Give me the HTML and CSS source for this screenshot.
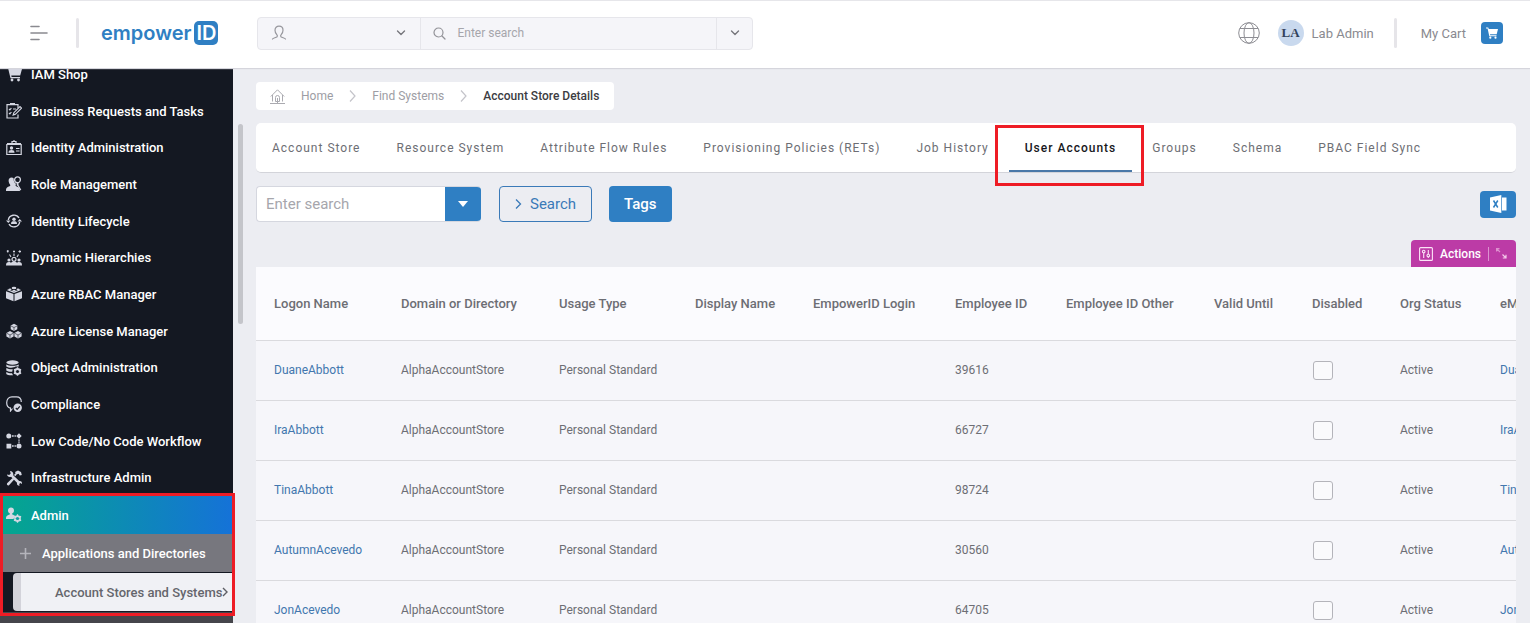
FILE: index.html
```html
<!DOCTYPE html>
<html lang="en">
<head>
    <meta charset="UTF-8">
    <meta name="viewport" content="width=device-width, initial-scale=1.0">
    <title>EmpowerID - Account Store Details</title>
    <link rel="stylesheet" href="styles.css">
</head>
<body>

    <header class="topbar">
        <button class="menu-btn" aria-label="Toggle menu">
            <svg width="18" height="16" viewBox="0 0 18 16" fill="none" stroke="#8a8a90" stroke-width="1.6" stroke-linecap="round"><path d="M1 1.5h8M1 8h16M1 14.5h8"/></svg>
        </button>
        <span class="divider"></span>
        <a class="logo" href="#"><span>empower</span><span class="logo-id">ID</span></a>

        <div class="top-search">
            <button class="scope" aria-label="Search scope">
                <svg width="16" height="16" viewBox="0 0 16 16" fill="none" stroke="#97979d" stroke-width="1.2" stroke-linecap="round"><path d="M1.500 14c1-1.500 3-1 4.600-2.200.6-.6.3-1.300-.3-2.100C4.600 8.300 4 6.800 4 5.200 4 2.800 5.700 1.200 8 1.200s4 1.600 4 4c0 1.600-.6 3.100-1.800 4.500-.6.8-.9 1.500-.3 2.100 1.600 1.200 3.600.7 4.600 2.200"/></svg>
                <svg width="10" height="6" viewBox="0 0 10 6" fill="none" stroke="#77777d" stroke-width="1.4" stroke-linecap="round" stroke-linejoin="round"><path d="M1.500 1 5 4.500 8.500 1"/></svg>
            </button>
            <label class="query">
                <svg width="13" height="13" viewBox="0 0 13 13" fill="none" stroke="#929298" stroke-width="1.2" stroke-linecap="round"><circle cx="5.500" cy="5.500" r="4.500"/><path d="m9 9 3 3"/></svg>
                <input type="text" placeholder="Enter search" aria-label="Global search">
            </label>
            <button class="more" aria-label="Search options">
                <svg width="10" height="6" viewBox="0 0 10 6" fill="none" stroke="#77777d" stroke-width="1.4" stroke-linecap="round" stroke-linejoin="round"><path d="M1.500 1 5 4.500 8.500 1"/></svg>
            </button>
        </div>

        <div class="user-area">
            <button class="globe" aria-label="Language">
                <svg width="22" height="24" viewBox="0 0 22 24" fill="none" stroke="#8e8e94" stroke-width="1"><circle cx="11" cy="12" r="10.300"/><ellipse cx="11" cy="12" rx="5" ry="10.300"/><path d="M2 7.500h18M2 16.500h18"/></svg>
            </button>
            <span class="avatar">LA</span>
            <a class="user-name" href="#">Lab Admin</a>
            <span class="divider"></span>
            <a class="cart-label" href="#">My Cart</a>
            <button class="cart-btn" aria-label="Open cart">
                <svg width="12" height="12" viewBox="0 0 12 12" fill="#fff"><path d="M0 .5h2.200l.6 1.600H12l-1.300 5.200H4l.2.900h6.300v1H3.300L1.600 1.500H0z"/><circle cx="4.300" cy="10.700" r="1.100"/><circle cx="9.500" cy="10.700" r="1.100"/></svg>
            </button>
        </div>
    </header>

    <div class="layout">
        <nav class="sidebar">
            <ul class="nav-list">
                <li><a href="#">
                    <svg class="icon" viewBox="0 0 16 16"><path d="M0 1h3l.7 2H16l-1.800 6.500H5.300l.3 1.500h8.400v1.300H4.500L2.100 2.300H0z"/><circle cx="6" cy="14" r="1.400"/><circle cx="12.500" cy="14" r="1.400"/></svg>
                    IAM Shop</a></li>
                <li><a href="#">
                    <svg class="icon line" viewBox="0 0 16 16"><path d="M12 5V1.600H1V15h11v-3.500"/><path d="M4 .8h5" stroke-width="2"/><path d="m3 6 .9.900L5.400 5M7 6h3M3 10l.9.900L5.400 9"/><path d="m7.200 12 .7-2.300L14 3.500l1.600 1.600-6.200 6.200z"/></svg>
                    Business Requests and Tasks</a></li>
                <li><a href="#">
                    <svg class="icon line" viewBox="0 0 16 16"><path d="M.8 4.500h14.400v10H.8z"/><path d="M1 4h14" stroke-width="2"/><path d="M6 4V1.500h4V4M8 0v1.500M10 8.500h3.500M10 11h3.500"/><g fill="#d5d7e2" stroke="none"><circle cx="5.500" cy="8" r="1.700"/><path d="M2.500 12.800c0-2.200 1.200-2.800 3-2.800s3 .6 3 2.800z"/></g></svg>
                    Identity Administration</a></li>
                <li><a href="#">
                    <svg class="icon" viewBox="0 0 16 16"><path d="M5.500 1.500c1 0 1.700.3 2.200 1C7.500 5.500 8.500 7 10 7.800l-.5 1.700c.3 1 3.500 1.200 4 3L14 15H0c0-3.500 1-3.800 4-5 .5-.5.400-1-.2-1.700C2 5.500 2.200 1.500 5.500 1.500z"/><circle cx="11.500" cy="3.800" r="2.900" fill="#141822" stroke="#d5d7e2" stroke-width="1.300"/><path d="M10.500 7h2v2l2.800 4.800-1.300.7-2.300-4.500-.9-.5z"/></svg>
                    Role Management</a></li>
                <li><a href="#">
                    <svg class="icon line" viewBox="0 0 16 16"><path d="M2.300 7A5.800 5.800 0 0 1 13 5M13.700 9A5.800 5.800 0 0 1 3 11" stroke-width="1.400"/><path d="M0 7.500h4.500L2.300 10zM11.500 8.500H16L13.700 6z" fill="#d5d7e2" stroke="none"/><g fill="#d5d7e2" stroke="none"><circle cx="8" cy="6.200" r="1.700"/><path d="M5 11c0-2.200 1-2.700 3-2.700s3 .5 3 2.700z"/></g></svg>
                    Identity Lifecycle</a></li>
                <li><a href="#">
                    <svg class="icon" viewBox="0 0 16 16"><circle cx="3" cy="10" r="1.600"/><circle cx="13" cy="10" r="1.600"/><path d="M0 15.500c0-2.800 1-3.500 3-3.500 1 0 1.500.2 2 .8.700-.7 1.600-1 3-1s2.300.3 3 1c.5-.6 1-.8 2-.8 2 0 3 .7 3 3.500z"/><circle cx="8" cy="9.300" r="2" fill="none" stroke="#d5d7e2" stroke-width="1.200"/><path d="M3.500 4.500 5 7M12.500 4.500 11 7M8 3.500V6M1 .5 2.500 2M2.500.5 1 2M7 1.500h2M8 .5v2M12.500 1.500H15M13.800.3v2.500" fill="none" stroke="#d5d7e2" stroke-width="1.100"/></svg>
                    Dynamic Hierarchies</a></li>
                <li><a href="#">
                    <svg class="icon" viewBox="0 0 16 16"><path d="M0 5.200 7.500 8v7.200L0 12.300zM16 5.200 8.500 8v7.200l7.500-2.900z"/><path d="M.8 4 3 3.200l1.200 1L8 5.600l3.800-1.400 1.200-1 2.200.8L8 6.900z"/><ellipse cx="8" cy="1.900" rx="2.300" ry="1.200"/><ellipse cx="4" cy="3.300" rx="1.500" ry=".9"/><ellipse cx="12" cy="3.300" rx="1.500" ry=".9"/><ellipse cx="8" cy="4.600" rx="1.700" ry=".8"/></svg>
                    Azure RBAC Manager</a></li>
                <li><a href="#">
                    <svg class="icon" viewBox="0 0 16 16"><path d="m8 .8 3.300 1.800v3.600L8 8 4.700 6.200V2.600zM4 8l3.600 1.900v3.600L4 15.400.4 13.500V9.900zM12 8l3.600 1.900v3.600L12 15.400l-3.600-1.900V9.900z"/><path d="m5 3 3 1.500L11 3M8 4.500v3M.8 10.300 4 12l3.200-1.700M4 12v3M8.800 10.300 12 12l3.200-1.700M12 12v3" fill="none" stroke="#141822" stroke-width=".6"/></svg>
                    Azure License Manager</a></li>
                <li><a href="#">
                    <svg class="icon" viewBox="0 0 16 16"><ellipse cx="6.500" cy="2.500" rx="6.200" ry="2.200"/><path d="M.3 4.400c2 1.800 10.400 1.800 12.400 0v2.200H9.500C8 8 3 8.200.3 6.500zM.3 8c2 1.200 4.500 1.400 6.500 1.200l-.6 2.600C4 12 1.500 11.500.3 10.500zM.3 12c1.500 1 3.700 1.300 5.700 1.200l1 2c-3 .2-6-.2-6.700-1.200z"/><circle cx="11.500" cy="11.500" r="2.600" fill="none" stroke="#d5d7e2" stroke-width="1.600"/><path d="M11.500 7.300v8.400M7.900 9.400l7.200 4.200M7.900 13.600l7.200-4.200" fill="none" stroke="#d5d7e2" stroke-width="1.500"/><circle cx="11.500" cy="11.500" r="1.500" fill="#141822"/></svg>
                    Object Administration</a></li>
                <li><a href="#">
                    <svg class="icon line" viewBox="0 0 16 16"><path d="M4.500 12.300C2 11.500.7 9.500.7 6.800.7 2.900 3 .8 6 .8h4.500c3 0 4.800 2 4.800 5.200"/><path d="M4.500 11.500V15l2-2.500"/><circle cx="11.700" cy="11.800" r="4.200" fill="#d5d7e2" stroke="none"/><path d="m9.800 12 1.400 1.400 2.600-3" stroke="#141822"/></svg>
                    Compliance</a></li>
                <li><a href="#">
                    <svg class="icon" viewBox="0 0 16 16"><circle cx="2.800" cy="3" r="2.500"/><circle cx="13" cy="13" r="2.500"/><path d="M.5 10.800h4.800v4.700H.5zM13 .3 15.700 3 13 5.700 10.300 3zM6 2.300h1.700v1.400H6zM8.500 2.300h1.400v1.400H8.500zM6 12.300h1.700v1.400H6zM8.500 12.300h1.400v1.400H8.500zM12.300 6.500h1.400v1.300h-1.400zM12.300 8.500h1.400v1.300h-1.400z"/></svg>
                    Low Code/No Code Workflow</a></li>
                <li><a href="#">
                    <svg class="icon" viewBox="0 0 16 16"><path d="M1 4.500 3.200 5l1.500-1.600L4 1c2.300 0 3.800 1.800 3.200 4.200l6 5.900c2-.4 3 .9 2.800 3l-1.500-1-1.400 1 .6 1.500c-2 .3-3-1-2.700-2.800L5 6.800C3 7.400 1.200 6.500 1 4.500z"/><path d="m9 2 3-1.500 3 1.500.8 3-2 .4-1.200-1.600-2 .6-1.200 1.900-1.400-1.400 1.600-1.600zM6.500 8l1.700 1.600L3 15.200c-1 .8-2.800-.7-1.900-1.900z"/></svg>
                    Infrastructure Admin</a></li>
            </ul>
            <a class="nav-active" href="#">
                <svg class="icon" viewBox="0 0 16 16"><circle cx="5" cy="3.500" r="3"/><path d="M3.800 6h2.400v1.500c1.500.6 2 .7 2.800 1.300L7.500 12H0c0-3.200 1-3.500 3.800-4.500z"/><circle cx="11.500" cy="11.500" r="2.600" fill="none" stroke="#d5d7e2" stroke-width="1.500"/><path d="M11.500 7.300v8.400M7.900 9.400l7.200 4.200M7.900 13.600l7.200-4.200" fill="none" stroke="#d5d7e2" stroke-width="1.300"/><circle cx="11.500" cy="11.500" r="1.600" fill="#109e9f"/></svg>
                Admin</a>
            <a class="nav-sub" href="#">
                <svg width="11" height="11" viewBox="0 0 11 11" stroke="#b4b4bb" stroke-width="1.600"><path d="M5.500 0v11M0 5.500h11"/></svg>
                Applications and Directories</a>
            <a class="nav-leaf" href="#">
                Account Stores and Systems
                <svg width="6" height="10" viewBox="0 0 6 10" fill="none" stroke="#5d5e64" stroke-width="1.400"><path d="m1 1 4 4-4 4"/></svg>
            </a>
            <div class="highlight highlight-nav"></div>
        </nav>

        <main class="content">
            <div class="scroll-thumb"></div>

            <nav class="breadcrumb" aria-label="Breadcrumb">
                <svg width="15" height="15" viewBox="0 0 15 15" fill="none" stroke="#aaaab0" stroke-width="1"><path d="M.8 7.500 7.500.8l6.700 6.700M2.500 6v6.500M12.500 6v6.500M0 14.500h15M7.500 9v5.500"/><path d="M5.500 12.500V8.500a2 2 0 0 1 4 0v4z"/></svg>
                <a href="#">Home</a>
                <svg width="7" height="12" viewBox="0 0 7 12" fill="none" stroke="#c4c4ca" stroke-width="1.200"><path d="m1 .5 5 5.500-5 5.500"/></svg>
                <a href="#">Find Systems</a>
                <svg width="7" height="12" viewBox="0 0 7 12" fill="none" stroke="#c4c4ca" stroke-width="1.200"><path d="m1 .5 5 5.500-5 5.500"/></svg>
                <span class="current">Account Store Details</span>
            </nav>

            <div class="tabs">
                <a href="#">Account Store</a>
                <a href="#">Resource System</a>
                <a href="#">Attribute Flow Rules</a>
                <a href="#">Provisioning Policies (RETs)</a>
                <a href="#">Job History</a>
                <a href="#" class="active">User Accounts<span class="highlight highlight-tab"></span></a>
                <a href="#">Groups</a>
                <a href="#">Schema</a>
                <a href="#">PBAC Field Sync</a>
            </div>

            <div class="toolbar">
                <div class="filter">
                    <input type="text" placeholder="Enter search" aria-label="Search user accounts">
                    <button aria-label="Search options">
                        <svg width="10" height="6" viewBox="0 0 10 6" fill="#fff"><path d="M0 0h10L5 6z"/></svg>
                    </button>
                </div>
                <button class="btn-outline">
                    <svg width="7" height="10" viewBox="0 0 7 10" fill="none" stroke="#3a7ab8" stroke-width="1.300"><path d="m1 .5 4.500 4.500L1 9.500"/></svg>
                    Search
                </button>
                <button class="btn-solid">Tags</button>
                <button class="btn-export" aria-label="Export to Excel">
                    <svg width="17" height="18" viewBox="0 0 17 18"><path d="M12 2.500h4.500v13H12z" fill="#fff"/><path d="M0 2.500 11.300 0v18L0 15.500z" fill="#fff"/><path d="m3.500 5.500 4.300 7M7.800 5.500l-4.300 7" stroke="#2f7fc3" stroke-width="1.500"/></svg>
                </button>
            </div>

            <div class="actions-row">
                <button class="actions">
                    <svg width="14" height="14" viewBox="0 0 14 14" fill="none" stroke="#fbe4f6" stroke-width="1.100"><rect x=".6" y=".6" width="12.800" height="12.800" rx="1"/><circle cx="4.700" cy="4.500" r="1.300"/><path d="M4.700 6v5M9.300 3v4M9.300 10v1"/><circle cx="9.300" cy="8.500" r="1.300"/></svg>
                    Actions
                    <span class="sep"></span>
                    <svg width="11" height="11" viewBox="0 0 11 11" fill="none" stroke="#f4c9ea" stroke-width="1.200"><path d="M.6.600 4 4M.6 3.500V.6h2.900" opacity=".6"/><path d="m6.500 6.500 3.500 3.500M10 6.800V10H6.800"/></svg>
                </button>
            </div>

            <div class="table-wrap">
                <table>
                    <colgroup>
                        <col class="c-logon"><col class="c-domain"><col class="c-usage"><col class="c-display"><col class="c-login"><col class="c-emp"><col class="c-other"><col class="c-valid"><col class="c-disabled"><col class="c-status"><col class="c-email">
                    </colgroup>
                    <thead>
                        <tr>
                            <th>Logon Name</th>
                            <th>Domain or Directory</th>
                            <th>Usage Type</th>
                            <th>Display Name</th>
                            <th>EmpowerID Login</th>
                            <th>Employee ID</th>
                            <th>Employee ID Other</th>
                            <th>Valid Until</th>
                            <th>Disabled</th>
                            <th>Org Status</th>
                            <th>eMail</th>
                        </tr>
                    </thead>
                    <tbody>
                        <tr>
                            <td><a href="#">DuaneAbbott</a></td>
                            <td>AlphaAccountStore</td>
                            <td>Personal Standard</td>
                            <td></td>
                            <td></td>
                            <td>39616</td>
                            <td></td>
                            <td></td>
                            <td><input type="checkbox" aria-label="DuaneAbbott disabled"></td>
                            <td>Active</td>
                            <td><a href="#">DuaneAbbott</a></td>
                        </tr>
                        <tr>
                            <td><a href="#">IraAbbott</a></td>
                            <td>AlphaAccountStore</td>
                            <td>Personal Standard</td>
                            <td></td>
                            <td></td>
                            <td>66727</td>
                            <td></td>
                            <td></td>
                            <td><input type="checkbox" aria-label="IraAbbott disabled"></td>
                            <td>Active</td>
                            <td><a href="#">IraAbbott</a></td>
                        </tr>
                        <tr>
                            <td><a href="#">TinaAbbott</a></td>
                            <td>AlphaAccountStore</td>
                            <td>Personal Standard</td>
                            <td></td>
                            <td></td>
                            <td>98724</td>
                            <td></td>
                            <td></td>
                            <td><input type="checkbox" aria-label="TinaAbbott disabled"></td>
                            <td>Active</td>
                            <td><a href="#">TinaAbbott</a></td>
                        </tr>
                        <tr>
                            <td><a href="#">AutumnAcevedo</a></td>
                            <td>AlphaAccountStore</td>
                            <td>Personal Standard</td>
                            <td></td>
                            <td></td>
                            <td>30560</td>
                            <td></td>
                            <td></td>
                            <td><input type="checkbox" aria-label="AutumnAcevedo disabled"></td>
                            <td>Active</td>
                            <td><a href="#">AutumnAcevedo</a></td>
                        </tr>
                        <tr>
                            <td><a href="#">JonAcevedo</a></td>
                            <td>AlphaAccountStore</td>
                            <td>Personal Standard</td>
                            <td></td>
                            <td></td>
                            <td>64705</td>
                            <td></td>
                            <td></td>
                            <td><input type="checkbox" aria-label="JonAcevedo disabled"></td>
                            <td>Active</td>
                            <td><a href="#">JonAcevedo</a></td>
                        </tr>
                    </tbody>
                </table>
            </div>
        </main>
    </div>

</body>
</html>
```
FILE: styles.css
```css
* {
    margin: 0;
    padding: 0;
    box-sizing: border-box;
}

body {
    font-family: Roboto, 'Liberation Sans', sans-serif;
    font-size: 13px;
    color: #6d6e74;
    background: #ecedf2;
    height: 100vh;
    display: flex;
    flex-direction: column;
    overflow: hidden;
}

a {
    color: inherit;
    text-decoration: none;
}

button,
input {
    font: inherit;
    color: inherit;
    border: none;
    background: none;
}

button {
    cursor: pointer;
}

svg {
    display: block;
    flex: none;
}

/* Top bar */
.topbar {
    height: 68px;
    flex: none;
    display: flex;
    align-items: center;
    padding: 0 27px 3px 30px;
    background: #fff;
    border-top: 1px solid #e6e6ea;
    box-shadow: 0 1px 1px #d5d5dc;
    position: relative;
    z-index: 2;
}

.divider {
    width: 3px;
    height: 30px;
    border-radius: 2px;
    background: #e6e5e9;
}

.menu-btn {
    margin-right: 28px;
}

.logo {
    display: flex;
    align-items: center;
    gap: 3px;
    margin-left: 22px;
    font-family: Inter, sans-serif;
    font-size: 20px;
    font-weight: 600;
    color: #2f7fc3;
}

.logo-id {
    width: 24px;
    height: 24px;
    line-height: 24px;
    border-radius: 5px;
    background: #2f7fc3;
    color: #fff;
    text-align: center;
}

.top-search {
    display: flex;
    height: 33px;
    width: 496px;
    margin-left: 39px;
    background: #f5f5f9;
    border: 1px solid #e6e6eb;
    border-radius: 4px;
}

.scope {
    width: 163px;
    display: flex;
    align-items: center;
    justify-content: space-between;
    padding: 0 14px 0 13px;
    border-right: 1px solid #e6e6eb;
}

.query {
    flex: 1;
    display: flex;
    align-items: center;
    gap: 11px;
    padding-left: 12px;
}

.query input {
    flex: 1;
    min-width: 0;
    font-size: 12px;
    outline: none;
}

.query input::placeholder,
.filter input::placeholder {
    color: #a6a6ac;
}

.more {
    width: 36px;
    display: flex;
    align-items: center;
    justify-content: center;
    border-left: 1px solid #e6e6eb;
}

.user-area {
    display: flex;
    align-items: center;
    margin-left: auto;
    color: #8a8a90;
}

.avatar {
    width: 26px;
    height: 26px;
    line-height: 26px;
    margin: 0 8px 0 18px;
    border-radius: 50%;
    background: #c9d9ee;
    color: #33435c;
    font-family: 'Liberation Serif', serif;
    font-weight: bold;
    font-size: 13px;
    text-align: center;
}

.user-name {
    margin-right: 20px;
}

.cart-label {
    margin: 0 15px 0 24px;
}

.cart-btn {
    width: 22px;
    height: 22px;
    display: flex;
    align-items: center;
    justify-content: center;
    border-radius: 4px;
    background: #2f7fc3;
}

/* Layout */
.layout {
    flex: 1;
    display: flex;
    min-height: 0;
}

/* Sidebar, scrolled a little way down */
.sidebar {
    width: 233px;
    flex: none;
    margin-top: -12px;
    background: linear-gradient(#141822 556px, #45454b 556px);
    color: #fff;
    font-weight: 500;
    position: relative;
}

.nav-list {
    list-style: none;
    height: 440px;
    display: flex;
    flex-direction: column;
}

.nav-list li {
    flex: 1;
    display: flex;
}

.nav-list a,
.nav-active,
.nav-sub {
    flex: 1;
    display: flex;
    align-items: center;
    gap: 9px;
    padding-left: 6px;
}

.icon {
    width: 16px;
    height: 16px;
    fill: #d5d7e2;
}

.icon.line {
    fill: none;
    stroke: #d5d7e2;
    stroke-width: 1.2;
}

.nav-active {
    height: 38px;
    background: linear-gradient(90deg, #04a78d, #1572d8);
}

.nav-sub {
    height: 38px;
    padding-left: 20px;
    gap: 11px;
    background: #77777e;
}

.nav-leaf {
    height: 38px;
    margin: 1px 1px 0 13px;
    padding: 0 4px 0 34px;
    display: flex;
    align-items: center;
    justify-content: space-between;
    white-space: nowrap;
    background: #f0f1f5;
    border-left: 8px solid #d3d3da;
    border-radius: 4px 0 0 4px;
    color: #65666c;
}

/* Red callout frames */
.highlight {
    position: absolute;
    border: 3px solid #ee1c25;
    pointer-events: none;
}

.highlight-nav {
    top: 437px;
    left: 0;
    right: -2px;
    height: 123px;
    z-index: 1;
}

.highlight-tab {
    top: 2px;
    left: -14px;
    right: -12px;
    height: 61px;
}

/* Main content */
.content {
    flex: 1;
    min-width: 0;
    padding: 14px 14px 0 23px;
    position: relative;
}

.scroll-thumb {
    position: absolute;
    top: 56px;
    left: 5px;
    width: 5px;
    height: 200px;
    border-radius: 3px;
    background: #c4c5ca;
}

.breadcrumb {
    display: flex;
    width: fit-content;
    align-items: center;
    gap: 16px;
    height: 28px;
    padding: 0 15px 0 14px;
    border-radius: 4px;
    background: #fff;
    color: #9d9da4;
    font-size: 12px;
}

.breadcrumb .current {
    color: #3c3c42;
    font-weight: 500;
}

.tabs {
    display: flex;
    gap: 36px;
    height: 50px;
    margin-top: 13px;
    padding-left: 16px;
    background: #fff;
    border-bottom: 1px solid #d3d4da;
    border-radius: 5px;
    font-size: 12px;
    letter-spacing: 1px;
}

.tabs a {
    display: flex;
    align-items: center;
    white-space: nowrap;
}

.tabs .active {
    position: relative;
    margin: 0 -16px;
    padding: 2px 16px 0;
    color: #17171c;
    font-weight: 500;
    border-bottom: 2px solid #4a78a8;
}

.toolbar {
    display: flex;
    align-items: center;
    margin-top: 13px;
    font-size: 15px;
}

.filter {
    display: flex;
    width: 225px;
    height: 36px;
    border-radius: 4px;
    overflow: hidden;
    background: #fff;
    border: 1px solid #d5d7df;
    border-right: none;
}

.filter input {
    flex: 1;
    min-width: 0;
    padding-left: 9px;
    outline: none;
}

.filter button {
    width: 36px;
    display: flex;
    align-items: center;
    justify-content: center;
    background: #2f7fc3;
}

.btn-outline {
    display: flex;
    align-items: center;
    gap: 8px;
    height: 36px;
    margin: 0 17px 0 18px;
    padding: 0 15px;
    border: 1px solid #3a7ab8;
    border-radius: 4px;
    color: #3a7ab8;
}

.btn-solid {
    height: 36px;
    padding: 0 15px;
    border-radius: 4px;
    background: #2f7fc3;
    color: #fff;
    font-weight: 500;
}

.btn-export {
    width: 36px;
    height: 27px;
    margin-left: auto;
    display: flex;
    align-items: center;
    justify-content: center;
    border-radius: 4px;
    background: #2f7fc3;
}

.actions-row {
    display: flex;
    justify-content: flex-end;
    margin-top: 18px;
}

.actions {
    display: flex;
    align-items: center;
    gap: 7px;
    height: 27px;
    padding: 0 9px 0 8px;
    border-radius: 4px 4px 0 0;
    background: #bc3ba6;
    color: #fff;
    font-size: 12px;
    font-weight: 500;
}

.actions .sep {
    width: 1px;
    height: 14px;
    background: #dc92d0;
}

/* Accounts table */
.table-wrap {
    overflow: hidden;
    background: #f6f6fa;
}

table {
    width: 1366px;
    table-layout: fixed;
    border-collapse: collapse;
}

th,
td {
    padding-left: 18px;
    text-align: left;
    white-space: nowrap;
    border-bottom: 1px solid #dadade;
}

th {
    height: 73px;
    background: #fbfbfe;
    font-weight: 500;
}

td {
    height: 60px;
    font-size: 12px;
}

td a {
    color: #4277ae;
}

td input {
    appearance: none;
    display: block;
    width: 20px;
    height: 19px;
    margin-left: 1px;
    border: 1px solid #b4b4ba;
    border-radius: 3px;
    background: #fafafc;
}

.c-logon { width: 127px; }
.c-domain { width: 158px; }
.c-usage { width: 136px; }
.c-display { width: 118px; }
.c-login { width: 142px; }
.c-emp { width: 111px; }
.c-other { width: 148px; }
.c-valid { width: 98px; }
.c-disabled { width: 88px; }
.c-status { width: 100px; }
.c-email { width: 140px; }
```
